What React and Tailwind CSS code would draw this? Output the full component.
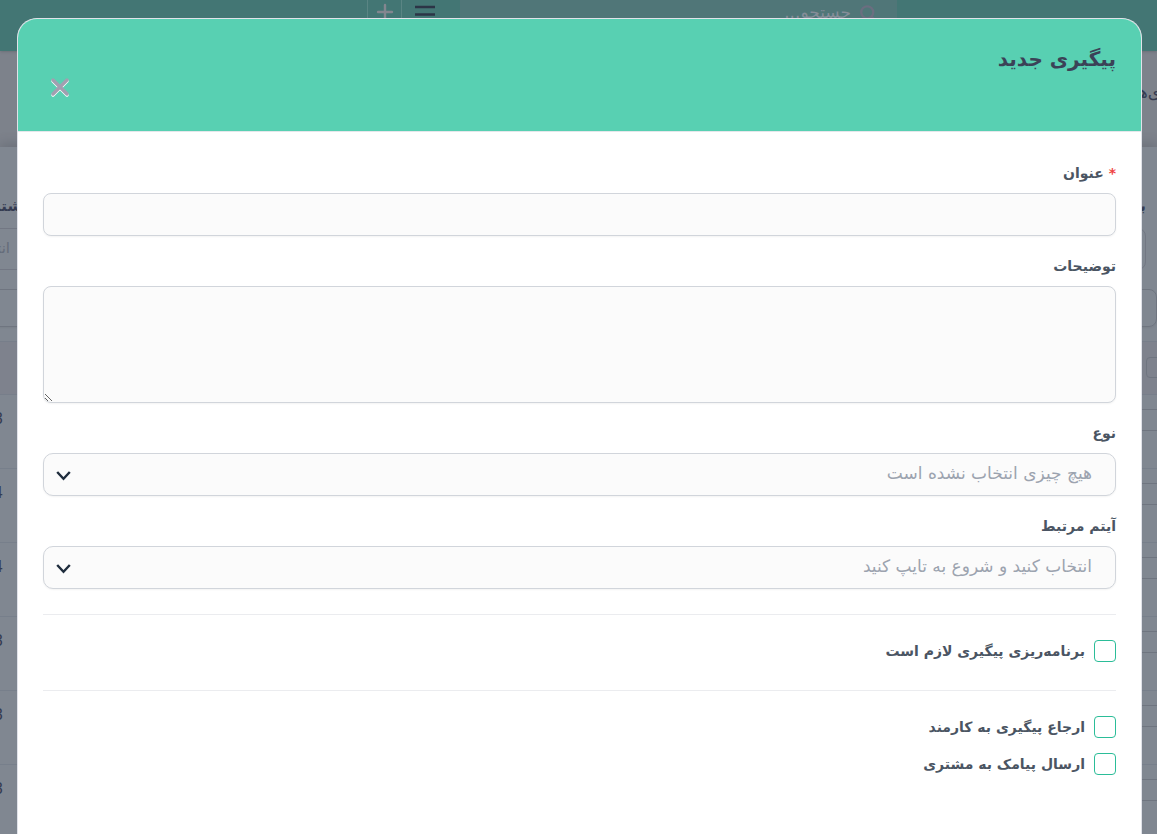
import { Menu, Plus, Search, X } from "lucide-react";

const rows = ["1403/08", "1403/04", "1403/04", "1403/08", "1403/08", "1403/08"];

const Field = ({ id, label, required, children }) => (
  <div>
    <label htmlFor={id} className="mb-2 block text-[14px] leading-6 font-bold text-[#4b5563]">
      {required && <span className="text-[#ef4444]">* </span>}
      {label}
    </label>
    {children}
  </div>
);

const SelectBox = ({ id, placeholder }) => (
  <div className="relative">
    <select
      id={id}
      defaultValue=""
      className="block h-[43px] w-full appearance-none rounded-[10px] border border-[#d1d5db] bg-[#fbfbfb] pr-[23px] pb-[2px] pl-12 text-[17px] text-[#9ca3af] shadow-xs"
    >
      <option value="">{placeholder}</option>
    </select>
    <svg className="pointer-events-none absolute top-[17px] left-[13px] h-[11px] w-[15px]" viewBox="0 0 15 11" fill="none" stroke="#1f2d3d">
      <path d="M1.2 2L7.5 8.8L13.8 2" strokeWidth={2.4} />
    </svg>
  </div>
);

const CheckRow = ({ id, label }) => (
  <div className="flex items-center gap-[9px]">
    <input
      id={id}
      type="checkbox"
      className="h-[22px] w-[22px] shrink-0 appearance-none rounded-[4px] border border-[#2bbd98] bg-white checked:bg-[#2bbd98]"
    />
    <label htmlFor={id} className="text-[14px] leading-[22px] font-bold text-[#4b5563]">
      {label}
    </label>
  </div>
);

const PageBehind = () => (
  <div className="h-screen overflow-hidden bg-[#7d828b] text-[#353c52]">
    {/* Top bar */}
    <header className="flex h-[51px] items-start bg-[#437674] pr-[260px] shadow-sm">
      <div className="flex h-[25px] w-[437px] items-center gap-2 bg-[#507678] pr-5">
        <Search className="h-[18px] w-[18px] text-[#6b6e80]" strokeWidth={3} />
        <input
          aria-label="جستجو"
          placeholder="جستجو..."
          className="min-w-0 flex-1 text-[17px] placeholder:text-[#858d98]"
        />
      </div>
      <button aria-label="منو" className="mr-[23px] flex h-[22px] w-6 items-center justify-center">
        <svg className="h-3 w-5" viewBox="0 0 20 12" stroke="#2c3446" strokeWidth={2.6}>
          <path d="M0 2H20M0 9.5H20" />
        </svg>
      </button>
      <button aria-label="افزودن" className="mr-[11px] flex h-6 w-[35px] items-center justify-center border-x border-[#5a8584] text-[#83868f]">
        <Plus className="h-6 w-6" strokeWidth={2.4} />
      </button>
    </header>

    <div className="flex h-24 items-center pb-3 text-[17px]">
      <span className="-mr-1 whitespace-nowrap">ی‌ها</span>
    </div>

    {/* Filters */}
    <div className="h-[194px] bg-[#808791] pt-[47px] shadow-[0_-4px_10px_rgba(60,65,75,0.25)]">
      <div className="flex justify-between text-[15px] leading-6 font-bold">
        <span className="pr-[11px]">برچسب</span>
        <span className="flex w-[32px] justify-start whitespace-nowrap">مشتری</span>
      </div>
      <div className="mt-[10px] flex h-[42px] justify-between">
        <div className="mr-[11px] w-40 rounded-lg border border-[#727783]" />
        <div className="flex w-20 items-center border-y border-[#727783] pb-[2px] text-[15px] text-[#656c7a]">
          <span className="mr-[70px] whitespace-nowrap">انتخاب</span>
        </div>
      </div>
      <div className="mt-[19px] -ml-3 h-[38px] rounded-lg border border-[#6f7580] shadow-xs" />
    </div>

    <table className="w-full table-fixed border-collapse bg-[#808791] text-[15px]">
      <thead>
        <tr className="h-[53px] border-y border-[#777e8a] bg-[#7e828d]">
          <th className="pb-[2px] text-right">
            <input type="checkbox" aria-label="انتخاب همه" className="-mr-[10px] block h-[21px] w-[21px] appearance-none rounded-[4px] border border-[#6f7580]" />
          </th>
          <th className="w-[3px]" />
        </tr>
      </thead>
      <tbody>
        {rows.map((date, i) => (
          <tr key={i} className="h-[74px] border-b border-[#777f8b]">
            <td className="pb-6">
              <div className="-mr-1 h-[22px] w-16 rounded-[4px] border border-[#6f7580]" />
            </td>
            <td className="w-[3px] overflow-visible pb-6">
              <span dir="ltr" className="float-right whitespace-nowrap">{date}</span>
            </td>
          </tr>
        ))}
      </tbody>
    </table>
  </div>
);

const App = () => {
  return (
    <div dir="rtl" className="font-['DejaVu_Sans','Noto_Sans',sans-serif]">
      <PageBehind />

      {/* New follow-up dialog */}
      <div className="fixed inset-0 flex flex-col overflow-hidden pt-[18px] pr-[15px] pl-[17px]">
        <div role="dialog" aria-labelledby="dialog-title" className="flex-1 overflow-hidden rounded-t-[20px] border border-b-0 border-[#e0e2e9] bg-white">
          <div className="flex h-[113px] flex-col border-b border-[#e5e7eb] bg-[#58d0b2] p-[25px] pb-0">
            <h2 id="dialog-title" className="text-[20px] leading-[30px] font-bold text-[#3b4257]">
              پیگیری جدید
            </h2>
            <button aria-label="بستن" className="flex h-[26px] w-[34px] items-center justify-center self-end text-[#a19fb0]">
              <X className="h-7 w-7 shrink-0 drop-shadow-[0_1px_0_#fff]" strokeWidth={3} />
            </button>
          </div>

          <form className="px-[25px] pt-[29px]">
            <div className="flex flex-col gap-[18px]">
              <Field id="title" label="عنوان" required>
                <input id="title" type="text" className="block h-[43px] w-full rounded-lg border border-[#d1d5db] bg-[#fbfbfb] px-3 text-[17px] shadow-xs" />
              </Field>
              <Field id="description" label="توضیحات">
                <textarea id="description" className="block h-[117px] w-full resize-y rounded-lg border border-[#d1d5db] bg-[#fbfbfb] p-3 text-[17px] shadow-xs" />
              </Field>
              <Field id="type" label="نوع">
                <SelectBox id="type" placeholder="هیچ چیزی انتخاب نشده است" />
              </Field>
              <Field id="related" label="آیتم مرتبط">
                <SelectBox id="related" placeholder="انتخاب کنید و شروع به تایپ کنید" />
              </Field>
            </div>

            <div className="mt-[25px] border-t border-[#ebecef] pt-[25px] pb-7">
              <CheckRow id="schedule" label="برنامه‌ریزی پیگیری لازم است" />
            </div>
            <div className="flex flex-col gap-[15px] border-t border-[#ebecef] pt-[25px]">
              <CheckRow id="assign" label="ارجاع پیگیری به کارمند" />
              <CheckRow id="sms" label="ارسال پیامک به مشتری" />
            </div>
          </form>
        </div>
      </div>
    </div>
  );
};

export default App;
